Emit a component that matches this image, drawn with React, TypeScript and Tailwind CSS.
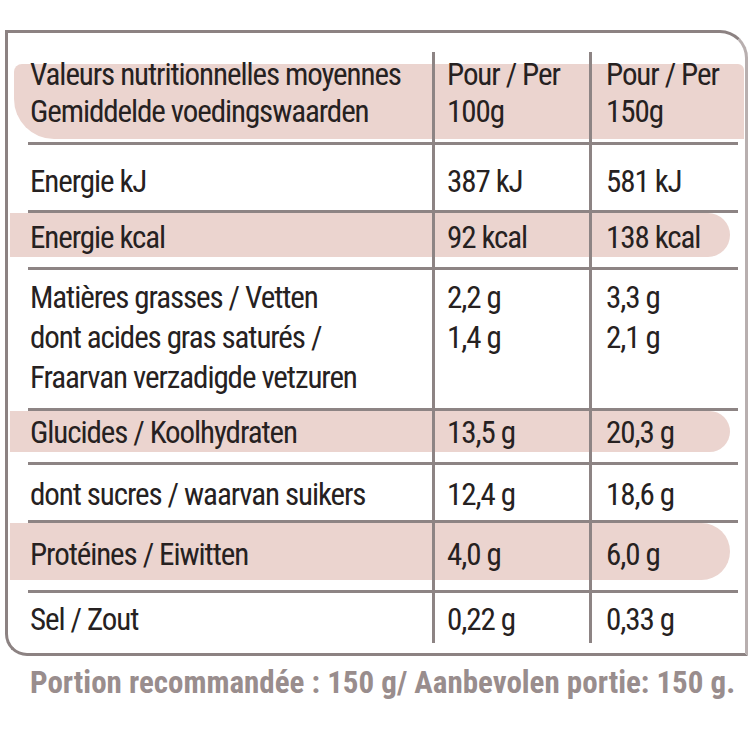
import React from 'react';

type Row = {
  label: string[];
  v100: string[];
  v150: string[];
  h: string;
  pt: string;
  band?: string;
  last?: boolean;
};

const rows: Row[] = [
  {
    label: ['Valeurs nutritionnelles moyennes', 'Gemiddelde voedingswaarden'],
    v100: ['Pour / Per', '100g'],
    v150: ['Pour / Per', '150g'],
    h: 'h-[93px]',
    pt: 'pt-[4px]',
    band: 'header',
  },
  { label: ['Energie kJ'], v100: ['387 kJ'], v150: ['581 kJ'], h: 'h-[68px]', pt: 'pt-[18px]' },
  { label: ['Energie kcal'], v100: ['92 kcal'], v150: ['138 kcal'], h: 'h-[57px]', pt: 'pt-[6px]', band: 'row' },
  {
    label: ['Matières grasses / Vetten', 'dont acides gras saturés /', 'Fraarvan verzadigde vetzuren'],
    v100: ['2,2 g', '1,4 g'],
    v150: ['3,3 g', '2,1 g'],
    h: 'h-[141px]',
    pt: 'pt-[8px]',
  },
  { label: ['Glucides / Koolhydraten'], v100: ['13,5 g'], v150: ['20,3 g'], h: 'h-[54px]', pt: 'pt-[3px]', band: 'row' },
  { label: ['dont sucres / waarvan suikers'], v100: ['12,4 g'], v150: ['18,6 g'], h: 'h-[58px]', pt: 'pt-[11px]' },
  { label: ['Protéines / Eiwitten'], v100: ['4,0 g'], v150: ['6,0 g'], h: 'h-[70px]', pt: 'pt-[13px]', band: 'row' },
  { label: ['Sel / Zout'], v100: ['0,22 g'], v150: ['0,33 g'], h: 'h-[50px]', pt: 'pt-[8px]', last: true },
];

function Lines({ lines, leading }: { lines: string[]; leading: string }) {
  return (
    <>
      {lines.map((l, i) => (
        <div key={i} className={`${leading} whitespace-nowrap`}>
          {l}
        </div>
      ))}
    </>
  );
}

export default function App() {
  return (
    <div className="w-[750px] h-[750px] bg-white overflow-hidden pt-[30px] font-['Roboto_Condensed','DejaVu_Sans_Condensed',sans-serif] text-[#262121]">
      {/* Table box */}
      <div className="ml-[5px] w-[743px] border-[3px] border-[#8c8282] border-r-[#b8afaf] rounded-tr-[28px] rounded-bl-[22px] pt-[19px] pl-[20px] pr-[7px] pb-[10px]">
        {rows.map((r, idx) => {
          const leading = r.label.length === 3 ? 'leading-[40px]' : 'leading-[37px]';
          return (
            <div
              key={idx}
              className={`relative grid grid-cols-[404px_157px_1fr] ${r.h} ${r.last ? '' : 'border-b-[3px] border-[#8d8484]'}`}
            >
              {r.band === 'header' && (
                <div className="absolute left-[-14px] right-[-6px] top-[12px] bottom-[3px] bg-[#ebd4cf] rounded-tl-[8px] rounded-bl-[40px] rounded-tr-[6px]" />
              )}
              {r.band === 'row' && (
                <div className="absolute left-[-18px] right-[8px] top-0 bottom-[10px] bg-[#ebd4cf] rounded-r-full rounded-l-[14px]" />
              )}
              <div className={`relative ${r.pt} pl-[2px] text-[31px] font-[450] tracking-[-0.035em]`}>
                <Lines lines={r.label} leading={leading} />
              </div>
              <div className={`relative ${r.pt} pl-[12px] border-l-[3px] border-[#8d8484] text-[31px] font-[450] tracking-[-0.035em]`}>
                <Lines lines={r.v100} leading={leading} />
              </div>
              <div className={`relative ${r.pt} pl-[14px] border-l-[3px] border-[#8d8484] text-[31px] font-[450] tracking-[-0.035em]`}>
                <Lines lines={r.v150} leading={leading} />
              </div>
            </div>
          );
        })}
      </div>

      {/* Footer */}
      <div className="mt-[9px] pl-[30px] text-[31px] leading-[36px] font-bold text-[#998d8d] whitespace-nowrap">
        Portion recommandée : 150 g/ Aanbevolen portie: 150 g.
      </div>
    </div>
  );
}
